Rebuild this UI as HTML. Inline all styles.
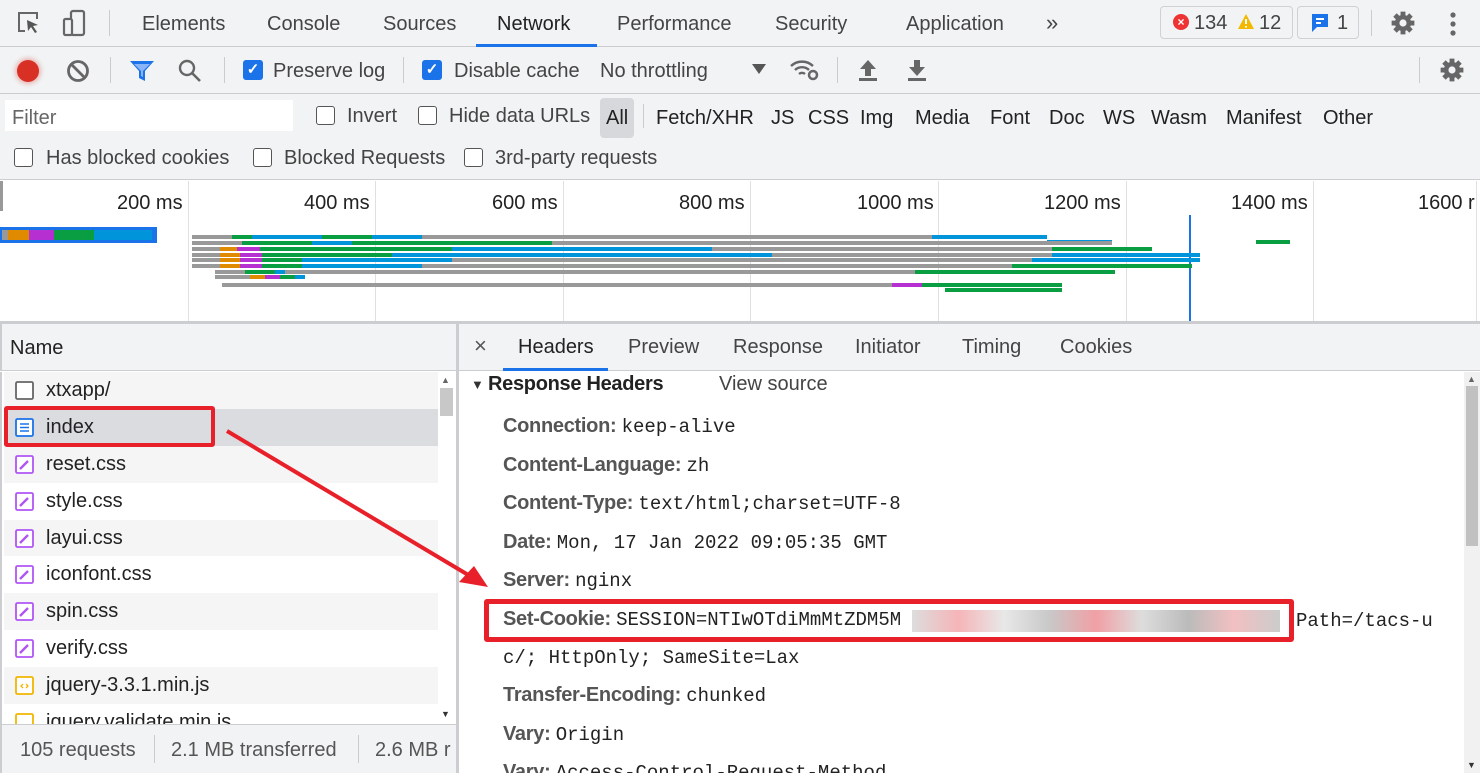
<!DOCTYPE html>
<html><head><meta charset="utf-8"><style>
*{box-sizing:border-box;margin:0;padding:0}
html,body{width:1480px;height:773px;overflow:hidden}
body{background:#fff;font-family:"Liberation Sans",sans-serif;color:#333;position:relative}
.a{position:absolute;white-space:nowrap}
.bar{position:absolute;left:0;width:1480px;background:#f1f3f4}
.t{font-size:20px;color:#444}
.cb{position:absolute;width:19px;height:19px;border:1.5px solid #555;border-radius:3px;background:#fff}
.cbc{position:absolute;width:20px;height:20px;border-radius:3px;background:#1a73e8;color:#fff;font-size:15px;text-align:center;line-height:20px;font-weight:bold}
.vs{position:absolute;width:1px;background:#ccc}
.row{position:absolute;left:4px;width:434px;height:37px}
.fn{position:absolute;left:42px;font-size:20px;color:#222;top:7px}
.ic{position:absolute;left:11px;top:9px}
.k{position:absolute;left:503px;font-size:20px;font-weight:bold;color:#555;letter-spacing:-0.3px}
.v{font-family:"Liberation Mono",monospace;font-weight:normal;color:#222;font-size:19px;letter-spacing:0}
.g{position:absolute;height:4px}
</style></head><body>
<!-- top tab bar -->
<div class="bar" style="top:0;height:47px;border-bottom:1px solid #cbcdd1"></div>
<svg class="a" style="left:16px;top:10px" width="26" height="26" viewBox="0 0 26 26"><path d="M9 21H3V3h18v6" fill="none" stroke="#666" stroke-width="2"/><path d="M11 10l11 5-5 1 4 6-2 1-4-6-3 4z" fill="#555"/></svg>
<svg class="a" style="left:62px;top:9px" width="24" height="28" viewBox="0 0 24 28"><rect x="9" y="2" width="13" height="24" rx="2" fill="none" stroke="#666" stroke-width="2.2"/><rect x="2" y="10" width="8" height="16" rx="1.5" fill="#f1f3f4" stroke="#666" stroke-width="2.2"/></svg>
<div class="vs" style="left:109px;top:10px;height:26px"></div>
<div class="a t" style="left:142px;top:13px">Elements</div>
<div class="a t" style="left:267px;top:13px">Console</div>
<div class="a t" style="left:383px;top:13px">Sources</div>
<div class="a t" style="left:497px;top:13px;color:#222">Network</div>
<div class="a" style="left:476px;top:44px;width:121px;height:3px;background:#1a73e8"></div>
<div class="a t" style="left:617px;top:13px">Performance</div>
<div class="a t" style="left:775px;top:13px">Security</div>
<div class="a t" style="left:906px;top:13px">Application</div>
<div class="a t" style="left:1046px;top:10px;font-size:22px">»</div>
<div class="a" style="left:1160px;top:6px;width:133px;height:33px;border:1px solid #cfd1d4;border-radius:4px;background:#f1f3f4"></div>
<div class="a" style="left:1173px;top:14px;width:16px;height:16px;border-radius:50%;background:#e33;color:#fff;font-size:12px;text-align:center;line-height:16px;font-weight:bold">×</div>
<div class="a t" style="left:1194px;top:12px">134</div>
<svg class="a" style="left:1237px;top:13px" width="18" height="17"><path d="M9 1L17 16H1z" fill="#f3b900"/><path d="M9 6v5M9 13v1.5" stroke="#fff" stroke-width="2"/></svg>
<div class="a t" style="left:1259px;top:12px">12</div>
<div class="a" style="left:1297px;top:6px;width:62px;height:33px;border:1px solid #cfd1d4;border-radius:4px"></div>
<svg class="a" style="left:1310px;top:12px" width="20" height="21"><path d="M2 2h16v13H7l-5 5z" fill="#1a73e8"/><path d="M6 7h8M6 11h5" stroke="#fff" stroke-width="2"/></svg>
<div class="a t" style="left:1337px;top:12px">1</div>
<div class="vs" style="left:1371px;top:10px;height:26px"></div>
<svg class="a" style="left:1390px;top:10px" width="26" height="26" viewBox="0 0 24 24"><path fill="#666" d="M19.4 13c.04-.3.06-.65.06-1s-.02-.7-.07-1l2.1-1.6c.2-.15.24-.4.12-.63l-2-3.46c-.12-.22-.38-.3-.6-.22l-2.5 1a7.3 7.3 0 0 0-1.7-1l-.37-2.65A.5.5 0 0 0 14 2h-4a.5.5 0 0 0-.5.42L9.1 5.07c-.6.25-1.170.6-1.7 1l-2.5-1a.5.5 0 0 0-.6.22l-2 3.46c-.13.22-.07.48.12.63L4.56 11c-.04.32-.07.66-.07 1s.02.68.07 1l-2.1 1.62a.5.5 0 0 0-.12.64l2 3.46c.12.22.38.3.6.22l2.5-1c.52.4 1.08.73 1.7 1l.37 2.65c.05.24.26.42.5.42h4c.25 0 .46-.18.5-.42l.37-2.650c.6-.25 1.17-.6 1.7-1l2.5 1c.22.08.48 0 .6-.22l2-3.46a.5.5 0 0 0-.12-.64zM12 15.5A3.5 3.5 0 1 1 12 8.5a3.5 3.5 0 0 1 0 7z"/></svg>
<svg class="a" style="left:1447px;top:11px" width="12" height="26"><circle cx="6" cy="4" r="2.6" fill="#666"/><circle cx="6" cy="13" r="2.6" fill="#666"/><circle cx="6" cy="22" r="2.6" fill="#666"/></svg>

<!-- toolbar 2 -->
<div class="bar" style="top:47px;height:47px;border-bottom:1px solid #cbcdd1"></div>
<div class="a" style="left:17px;top:60px;width:22px;height:22px;border-radius:50%;background:#d93025;box-shadow:0 0 4px 2px rgba(217,48,37,.3)"></div>
<svg class="a" style="left:66px;top:59px" width="24" height="24"><circle cx="12" cy="12" r="9.5" fill="none" stroke="#666" stroke-width="2.8"/><path d="M5.5 5.5l13 13" stroke="#666" stroke-width="2.8"/></svg>
<div class="vs" style="left:110px;top:57px;height:26px"></div>
<svg class="a" style="left:128px;top:59px" width="28" height="24"><path d="M2 2h24l-9 10v10l-6-3v-7z" fill="#1a73e8"/><path d="M6 5h16l-7 7v6l-2-1v-5z" fill="#8ab4f8"/></svg>
<svg class="a" style="left:177px;top:58px" width="26" height="26"><circle cx="10" cy="10" r="7" fill="none" stroke="#666" stroke-width="2.4"/><path d="M15 15l8 8" stroke="#666" stroke-width="2.6"/></svg>
<div class="vs" style="left:224px;top:57px;height:26px"></div>
<div class="cbc" style="left:243px;top:60px">✓</div>
<div class="a t" style="left:273px;top:60px">Preserve log</div>
<div class="vs" style="left:403px;top:57px;height:26px"></div>
<div class="cbc" style="left:422px;top:60px">✓</div>
<div class="a t" style="left:454px;top:60px">Disable cache</div>
<div class="a t" style="left:600px;top:60px">No throttling</div>
<svg class="a" style="left:752px;top:64px" width="14" height="10"><path d="M0 0h14L7 10z" fill="#555"/></svg>
<svg class="a" style="left:789px;top:57px" width="32" height="26"><path d="M2 9a16 16 0 0 1 22 0M6 13a10 10 0 0 1 14 0M10 17a4.5 4.5 0 0 1 6 0" fill="none" stroke="#666" stroke-width="2.4"/><circle cx="24" cy="18" r="4" fill="none" stroke="#666" stroke-width="2.5"/></svg>
<div class="vs" style="left:837px;top:57px;height:26px"></div>
<svg class="a" style="left:857px;top:58px" width="22" height="24"><path d="M11 2l8 9h-5v7H8v-7H3z" fill="#666"/><rect x="2" y="20" width="18" height="3" fill="#666"/></svg>
<svg class="a" style="left:906px;top:58px" width="22" height="24"><path d="M11 18l8-9h-5V2H8v7H3z" fill="#666"/><rect x="2" y="20" width="18" height="3" fill="#666"/></svg>
<div class="vs" style="left:1419px;top:57px;height:26px"></div>
<svg class="a" style="left:1439px;top:57px" width="26" height="26" viewBox="0 0 24 24"><circle cx="12" cy="12" r="7.5" fill="#666"/><g stroke="#666" stroke-width="4.5"><path d="M12 1.5v21M1.5 12h21M4.6 4.6l14.8 14.8M19.4 4.6L4.6 19.4"/></g><circle cx="12" cy="12" r="3.3" fill="#f1f3f4"/></svg>
<svg class="a" style="left:1390px;top:10px" width="26" height="26" viewBox="0 0 24 24"><rect width="24" height="24" fill="#f1f3f4"/><circle cx="12" cy="12" r="7.5" fill="#666"/><g stroke="#666" stroke-width="4.5"><path d="M12 1.5v21M1.5 12h21M4.6 4.6l14.8 14.8M19.4 4.6L4.6 19.4"/></g><circle cx="12" cy="12" r="3.3" fill="#f1f3f4"/></svg>

<!-- filter rows -->
<div class="bar" style="top:94px;height:86px;border-bottom:1px solid #cbcdd1"></div>
<div class="a" style="left:5px;top:100px;width:288px;height:31px;background:#fff"></div>
<div class="a t" style="left:12px;top:107px;color:#666">Filter</div>
<div class="cb" style="left:316px;top:106px"></div><div class="a t" style="left:347px;top:105px">Invert</div>
<div class="cb" style="left:418px;top:106px"></div><div class="a t" style="left:449px;top:105px">Hide data URLs</div>
<div class="a" style="left:600px;top:98px;width:34px;height:40px;background:#d6d8db;border-radius:4px"></div>
<div class="a t" style="left:606px;top:107px;color:#222">All</div>
<div class="vs" style="left:643px;top:104px;height:24px"></div>
<div class="a t" style="left:656px;top:107px;color:#222">Fetch/XHR</div>
<div class="a t" style="left:771px;top:107px;color:#222">JS</div>
<div class="a t" style="left:808px;top:107px;color:#222">CSS</div>
<div class="a t" style="left:860px;top:107px;color:#222">Img</div>
<div class="a t" style="left:915px;top:107px;color:#222">Media</div>
<div class="a t" style="left:990px;top:107px;color:#222">Font</div>
<div class="a t" style="left:1049px;top:107px;color:#222">Doc</div>
<div class="a t" style="left:1103px;top:107px;color:#222">WS</div>
<div class="a t" style="left:1151px;top:107px;color:#222">Wasm</div>
<div class="a t" style="left:1226px;top:107px;color:#222">Manifest</div>
<div class="a t" style="left:1323px;top:107px;color:#222">Other</div>
<div class="cb" style="left:14px;top:148px"></div><div class="a t" style="left:46px;top:147px">Has blocked cookies</div>
<div class="cb" style="left:253px;top:148px"></div><div class="a t" style="left:284px;top:147px">Blocked Requests</div>
<div class="cb" style="left:464px;top:148px"></div><div class="a t" style="left:495px;top:147px">3rd-party requests</div>

<!-- timeline -->
<div class="a" style="left:0;top:181px;width:1480px;height:140px;background:#fff"></div>
<div class="a" style="left:0;top:181px;width:3px;height:30px;background:#999"></div>
<div class="vs" style="left:188px;top:181px;height:140px;background:#e0e0e0"></div>
<div class="vs" style="left:375px;top:181px;height:140px;background:#e0e0e0"></div>
<div class="vs" style="left:563px;top:181px;height:140px;background:#e0e0e0"></div>
<div class="vs" style="left:750px;top:181px;height:140px;background:#e0e0e0"></div>
<div class="vs" style="left:938px;top:181px;height:140px;background:#e0e0e0"></div>
<div class="vs" style="left:1126px;top:181px;height:140px;background:#e0e0e0"></div>
<div class="vs" style="left:1313px;top:181px;height:140px;background:#e0e0e0"></div>
<div class="vs" style="left:1476px;top:181px;height:140px;background:#e0e0e0"></div>
<div class="a t" style="left:117px;top:192px;color:#222">200 ms</div>
<div class="a t" style="left:304px;top:192px;color:#222">400 ms</div>
<div class="a t" style="left:492px;top:192px;color:#222">600 ms</div>
<div class="a t" style="left:679px;top:192px;color:#222">800 ms</div>
<div class="a t" style="left:857px;top:192px;color:#222">1000 ms</div>
<div class="a t" style="left:1044px;top:192px;color:#222">1200 ms</div>
<div class="a t" style="left:1231px;top:192px;color:#222">1400 ms</div>
<div class="a t" style="left:1418px;top:192px;color:#222">1600 r</div>
<div class="a" style="left:1189px;top:215px;width:2px;height:106px;background:#1a73e8"></div>
<div class="a" style="left:0;top:227px;width:157px;height:16px;background:#1a73e8"></div>
<div class="a" style="left:2px;top:230px;width:150px;height:10px;background:linear-gradient(90deg,#999 0 6px,#e08a00 6px 27px,#b52fd1 27px 52px,#0a9e42 52px 92px,#0095db 92px)"></div>
<div class="g" style="left:192px;top:235px;width:855px;background:linear-gradient(90deg,#999 0 40px,#0a9e42 40px 60px,#0095db 60px 130px,#0a9e42 130px 180px,#0095db 180px 230px,#999 230px 740px,#0095db 740px)"></div>
<div class="g" style="left:1047px;top:240px;width:65px;background:#0095db"></div>
<div class="g" style="left:192px;top:241px;width:920px;background:linear-gradient(90deg,#999 0 50px,#0a9e42 50px 120px,#0095db 120px 160px,#0a9e42 160px 360px,#999 360px)"></div>
<div class="g" style="left:192px;top:247px;width:960px;background:linear-gradient(90deg,#999 0 28px,#e08a00 28px 45px,#b52fd1 45px 68px,#0a9e42 68px 260px,#0095db 260px 520px,#999 520px 860px,#0a9e42 860px)"></div>
<div class="g" style="left:192px;top:253px;width:1008px;background:linear-gradient(90deg,#999 0 28px,#e08a00 28px 48px,#b52fd1 48px 70px,#0a9e42 70px 200px,#0095db 200px 580px,#999 580px 860px,#0095db 860px)"></div>
<div class="g" style="left:192px;top:258px;width:1008px;background:linear-gradient(90deg,#999 0 28px,#e08a00 28px 48px,#b52fd1 48px 70px,#0a9e42 70px 110px,#0095db 110px 260px,#999 260px 840px,#0095db 840px)"></div>
<div class="g" style="left:192px;top:264px;width:1000px;background:linear-gradient(90deg,#999 0 28px,#e08a00 28px 48px,#b52fd1 48px 70px,#0a9e42 70px 110px,#0095db 110px 230px,#999 230px 820px,#0a9e42 820px)"></div>
<div class="g" style="left:215px;top:270px;width:900px;background:linear-gradient(90deg,#999 0 30px,#0a9e42 30px 60px,#0095db 60px 70px,#999 70px 700px,#0a9e42 700px)"></div>
<div class="g" style="left:215px;top:275px;width:90px;background:linear-gradient(90deg,#999 0 35px,#e08a00 35px 50px,#b52fd1 50px 65px,#0a9e42 65px 80px,#0095db 80px)"></div>
<div class="g" style="left:222px;top:283px;width:840px;background:linear-gradient(90deg,#999 0 670px,#b52fd1 670px 700px,#0a9e42 700px)"></div>
<div class="g" style="left:945px;top:288px;width:117px;background:#0a9e42"></div>
<div class="g" style="left:1256px;top:240px;width:34px;background:#0a9e42"></div>

<!-- left panel -->
<div class="a" style="left:0;top:321px;width:1480px;height:3px;background:#cbcdd1"></div>
<div class="a" style="left:0;top:324px;width:458px;height:47px;background:#f1f3f4;border-bottom:1px solid #cbcdd1;border-left:2px solid #cbcdd1"></div>
<div class="a t" style="left:10px;top:337px;color:#222">Name</div>
<div class="a" style="left:0;top:372px;width:458px;height:352px;background:#fff;border-left:2px solid #cbcdd1"></div>
<div class="row" style="top:372px;background:#f5f5f5"><svg class="ic" width="19" height="19"><rect x="1" y="1" width="17" height="17" rx="1.5" fill="#fff" stroke="#666" stroke-width="1.8"/></svg><div class="fn">xtxapp/</div></div>
<div class="row" style="top:409px;background:#dadce0"><svg class="ic" width="19" height="19"><rect x="1" y="1" width="17" height="17" rx="1.5" fill="#fff" stroke="#1a73e8" stroke-width="1.8"/><path d="M5 6h9M5 9.5h9M5 13h9" stroke="#1a73e8" stroke-width="1.5"/></svg><div class="fn">index</div></div>
<div class="row" style="top:446px;background:#f5f5f5"><svg class="ic" width="19" height="19"><rect x="1" y="1" width="17" height="17" rx="1.5" fill="#fff" stroke="#b055f5" stroke-width="1.8"/><path d="M5 14l8-8" stroke="#b055f5" stroke-width="2.4"/></svg><div class="fn">reset.css</div></div>
<div class="row" style="top:483px;background:#fff"><svg class="ic" width="19" height="19"><rect x="1" y="1" width="17" height="17" rx="1.5" fill="#fff" stroke="#b055f5" stroke-width="1.8"/><path d="M5 14l8-8" stroke="#b055f5" stroke-width="2.4"/></svg><div class="fn">style.css</div></div>
<div class="row" style="top:520px;background:#f5f5f5"><svg class="ic" width="19" height="19"><rect x="1" y="1" width="17" height="17" rx="1.5" fill="#fff" stroke="#b055f5" stroke-width="1.8"/><path d="M5 14l8-8" stroke="#b055f5" stroke-width="2.4"/></svg><div class="fn">layui.css</div></div>
<div class="row" style="top:556px;background:#fff"><svg class="ic" width="19" height="19"><rect x="1" y="1" width="17" height="17" rx="1.5" fill="#fff" stroke="#b055f5" stroke-width="1.8"/><path d="M5 14l8-8" stroke="#b055f5" stroke-width="2.4"/></svg><div class="fn">iconfont.css</div></div>
<div class="row" style="top:593px;background:#f5f5f5"><svg class="ic" width="19" height="19"><rect x="1" y="1" width="17" height="17" rx="1.5" fill="#fff" stroke="#b055f5" stroke-width="1.8"/><path d="M5 14l8-8" stroke="#b055f5" stroke-width="2.4"/></svg><div class="fn">spin.css</div></div>
<div class="row" style="top:630px;background:#fff"><svg class="ic" width="19" height="19"><rect x="1" y="1" width="17" height="17" rx="1.5" fill="#fff" stroke="#b055f5" stroke-width="1.8"/><path d="M5 14l8-8" stroke="#b055f5" stroke-width="2.4"/></svg><div class="fn">verify.css</div></div>
<div class="row" style="top:667px;background:#f5f5f5"><svg class="ic" width="19" height="19"><rect x="1" y="1" width="17" height="17" rx="1.5" fill="#fff" stroke="#f2b600" stroke-width="1.8"/><path d="M8 8l-2 2 2 2M11 8l2 2-2 2" fill="none" stroke="#f2b600" stroke-width="1.3"/></svg><div class="fn">jquery-3.3.1.min.js</div></div>
<div class="row" style="top:704px;height:20px;overflow:hidden;background:#fff"><svg class="ic" width="19" height="19"><rect x="1" y="1" width="17" height="17" rx="1.5" fill="#fff" stroke="#f2b600" stroke-width="1.8"/></svg><div class="fn">jquery.validate.min.js</div></div>
<div class="a" style="left:440px;top:388px;width:13px;height:28px;background:#c8c8c8"></div>
<div class="a" style="left:441px;top:375px;font-size:9px;color:#666">▲</div>
<div class="a" style="left:441px;top:709px;font-size:9px;color:#333">▼</div>
<div class="a" style="left:0;top:724px;width:458px;height:49px;background:#f1f3f4;border-top:1px solid #cbcdd1;border-left:2px solid #cbcdd1"></div>
<div class="a t" style="left:20px;top:739px;color:#555">105 requests</div>
<div class="vs" style="left:154px;top:735px;height:28px"></div>
<div class="a t" style="left:171px;top:739px;color:#555">2.1 MB transferred</div>
<div class="vs" style="left:358px;top:735px;height:28px"></div>
<div class="a t" style="left:375px;top:739px;color:#555">2.6 MB r</div>
<div class="a" style="left:456px;top:324px;width:3px;height:449px;background:#cbcdd1"></div>
<div class="a" style="left:4px;top:406px;width:211px;height:41px;border:4px solid #e8202a;border-radius:3px"></div>

<!-- right panel -->
<div class="a" style="left:459px;top:324px;width:1021px;height:47px;background:#f1f3f4;border-bottom:1px solid #cbcdd1"></div>
<div class="a" style="left:474px;top:333px;font-size:22px;color:#555">×</div>
<div class="a t" style="left:518px;top:336px;color:#222">Headers</div>
<div class="a" style="left:503px;top:368px;width:105px;height:3px;background:#1a73e8"></div>
<div class="a t" style="left:628px;top:336px">Preview</div>
<div class="a t" style="left:733px;top:336px">Response</div>
<div class="a t" style="left:855px;top:336px">Initiator</div>
<div class="a t" style="left:962px;top:336px">Timing</div>
<div class="a t" style="left:1060px;top:336px">Cookies</div>
<div class="a" style="left:1464px;top:372px;width:16px;height:401px;background:#f1f1f1"></div>
<div class="a" style="left:1466px;top:386px;width:12px;height:160px;background:#c1c1c1"></div>
<div class="a" style="left:1467px;top:374px;font-size:9px;color:#666">▲</div>
<div class="a" style="left:1467px;top:760px;font-size:9px;color:#333">▼</div>
<div class="a" style="left:471px;top:377px;font-size:13px;color:#333">▼</div>
<div class="a" style="left:488px;top:373px;font-size:20px;font-weight:bold;color:#222;letter-spacing:-0.3px">Response Headers</div>
<div class="a t" style="left:719px;top:373px">View source</div>
<div class="a k" style="top:415px">Connection: <span class="v">keep-alive</span></div>
<div class="a k" style="top:454px">Content-Language: <span class="v">zh</span></div>
<div class="a k" style="top:492px">Content-Type: <span class="v">text/html;charset=UTF-8</span></div>
<div class="a k" style="top:531px">Date: <span class="v">Mon, 17 Jan 2022 09:05:35 GMT</span></div>
<div class="a k" style="top:569px">Server: <span class="v">nginx</span></div>
<div class="a k" style="top:608px">Set-Cookie: <span class="v">SESSION=NTIwOTdiMmMtZDM5M</span></div>
<div class="a" style="left:912px;top:610px;width:368px;height:22px;background:linear-gradient(90deg,#ddd,#f5b5b8,#e8e8e8,#c8c8c8,#f0a0a5,#ddd,#bbb,#f2c0c2,#ccc)"></div>
<div class="a v" style="left:1296px;top:610px">Path=/tacs-u</div>
<div class="a v" style="left:503px;top:647px">c/; HttpOnly; SameSite=Lax</div>
<div class="a k" style="top:684px">Transfer-Encoding: <span class="v">chunked</span></div>
<div class="a k" style="top:723px">Vary: <span class="v">Origin</span></div>
<div class="a k" style="top:761px">Vary: <span class="v">Access-Control-Request-Method</span></div>
<div class="a" style="left:484px;top:599px;width:810px;height:43px;border:5px solid #e8202a;border-radius:3px"></div>
<svg class="a" style="left:0;top:0" width="1480" height="773"><path d="M227 431L470 576" stroke="#e8202a" stroke-width="4"/><path d="M488 587L459 582L474 566Z" fill="#e8202a"/></svg>
</body></html>
